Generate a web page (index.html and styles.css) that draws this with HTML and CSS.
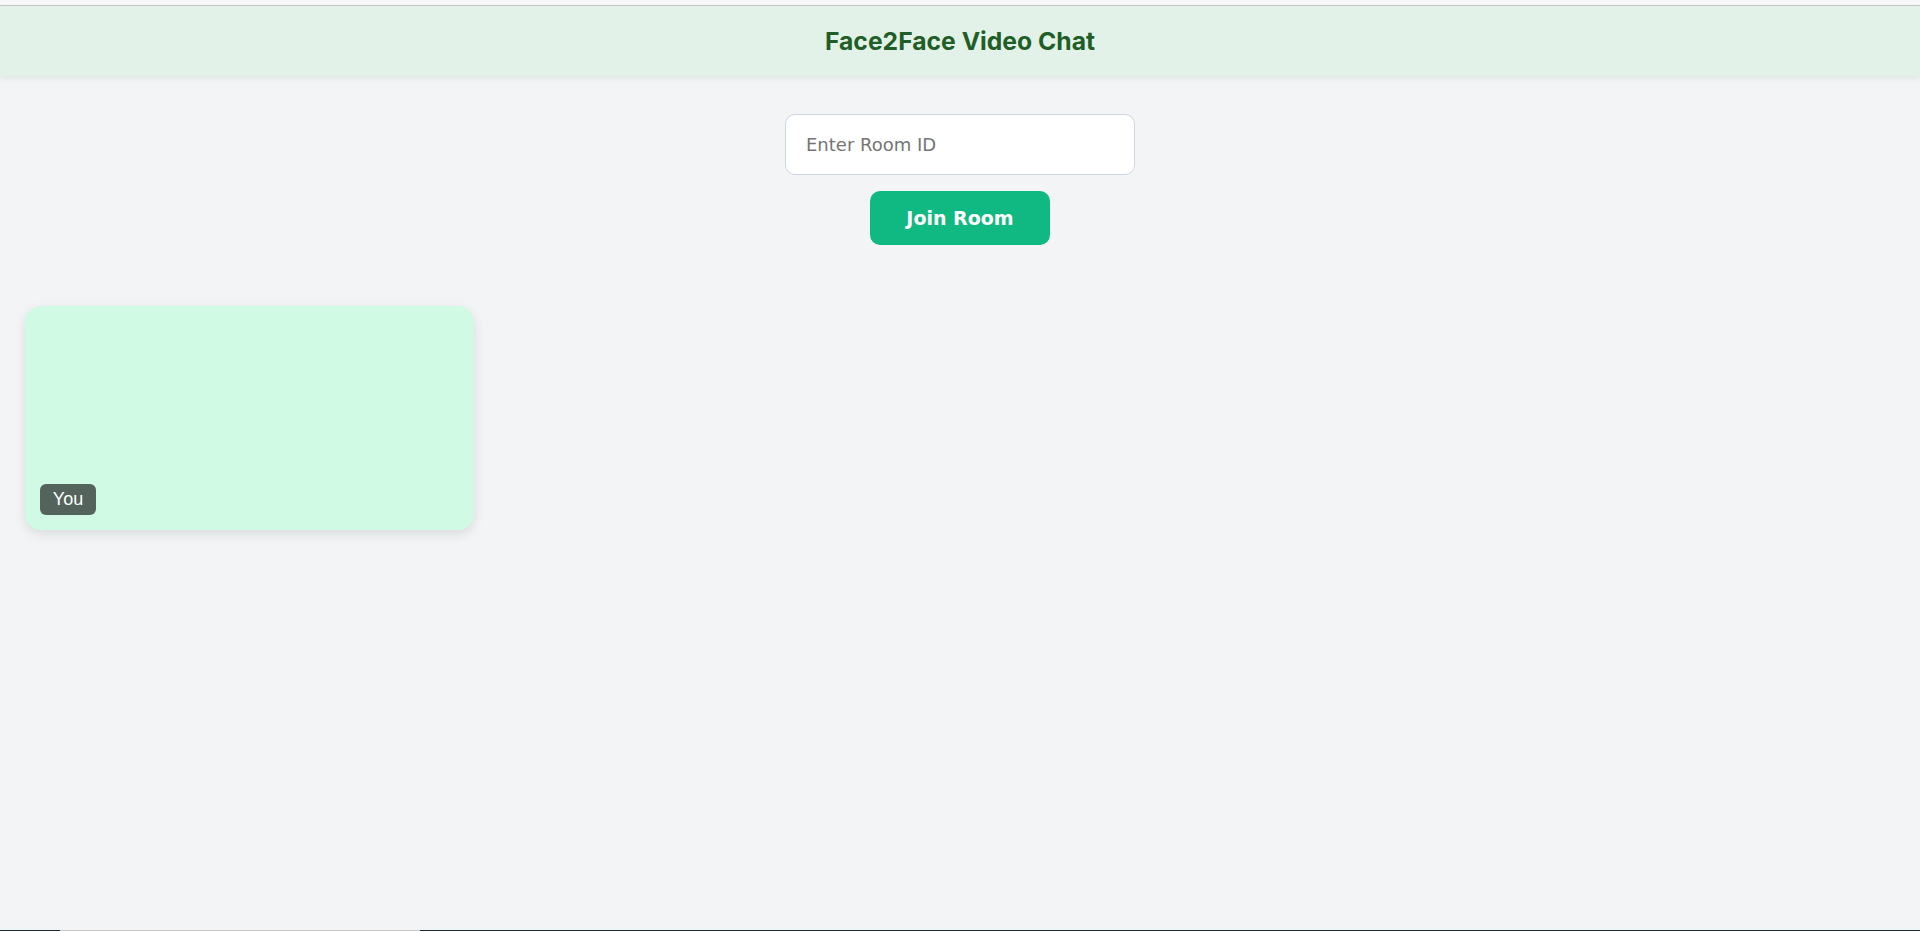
FILE: index.html
```html
<!DOCTYPE html>
<html lang="en">
<head>
<meta charset="utf-8">
<title>Face2Face Video Chat</title>
<link rel="stylesheet" href="styles.css">
</head>
<body>
<div class="page">
  <div class="topstrip"></div>
  <header class="header">
    <h1 class="title">Face2Face Video Chat</h1>
  </header>
  <main class="main">
    <div class="join">
      <input class="room-input" type="text" placeholder="Enter Room ID">
      <button class="join-btn">Join Room</button>
    </div>
    <section class="videos">
      <div class="video-card">
        <span class="badge">You</span>
      </div>
    </section>
  </main>
  <div class="bottombar">
    <span class="seg dark1"></span>
    <span class="seg light"></span>
    <span class="seg dark2"></span>
  </div>
</div>
</body>
</html>
```

FILE: styles.css
```css
html, body {
  margin: 0;
  padding: 0;
  height: 100%;
}
body {
  background: #f3f4f6;
  font-family: "DejaVu Sans", sans-serif;
}
.page {
  min-height: 100vh;
  display: flex;
  flex-direction: column;
}
.topstrip {
  height: 5px;
  background: #f8f8fa;
  border-bottom: 1px solid #c8c8c8;
}
.header {
  height: 70px;
  background: #e3f2e8;
  box-shadow: 0 2px 6px rgba(0, 0, 0, 0.07);
  display: flex;
  align-items: center;
  justify-content: center;
}
.title {
  margin: 0;
  font-family: Inter, sans-serif;
  font-weight: 700;
  font-size: 24.7px;
  color: #1f5e26;
}
.main {
  flex: 1;
  display: flex;
  flex-direction: column;
}
.join {
  margin-top: 38px;
  display: flex;
  flex-direction: column;
  align-items: center;
  gap: 16px;
}
.room-input {
  box-sizing: border-box;
  width: 350px;
  height: 61px;
  padding: 0 20px;
  border: 1px solid #cbd5e1;
  border-radius: 10px;
  background: #ffffff;
  font-family: "DejaVu Sans", sans-serif;
  font-size: 18px;
  color: #333;
  outline: none;
}
.room-input::placeholder {
  color: #757575;
}
.join-btn {
  width: 180px;
  height: 54px;
  border: none;
  border-radius: 10px;
  background: #10b981;
  color: #ffffff;
  font-family: "DejaVu Sans", sans-serif;
  font-weight: 700;
  font-size: 19px;
  cursor: pointer;
}
.videos {
  margin-top: 61px;
  padding-left: 25px;
  display: flex;
  gap: 20px;
}
.video-card {
  position: relative;
  width: 449px;
  height: 224px;
  background: #d1fae5;
  border-radius: 16px;
  box-shadow: 0 4px 12px rgba(0, 0, 0, 0.1);
}
.badge {
  position: absolute;
  left: 15px;
  bottom: 15px;
  height: 31px;
  width: 56px;
  box-sizing: border-box;
  display: flex;
  align-items: center;
  justify-content: center;
  background: rgba(0, 0, 0, 0.6);
  color: #ffffff;
  border-radius: 6px;
  font-family: "Liberation Sans", Arial, sans-serif;
  font-size: 18px;
}
.bottombar {
  display: flex;
  height: 1px;
}
.seg {
  display: block;
  height: 1px;
}
.dark1 {
  width: 60px;
  background: #1a2a33;
}
.light {
  width: 360px;
  background: #c8c8c8;
}
.dark2 {
  flex: 1;
  background: #1a2a33;
}
```
